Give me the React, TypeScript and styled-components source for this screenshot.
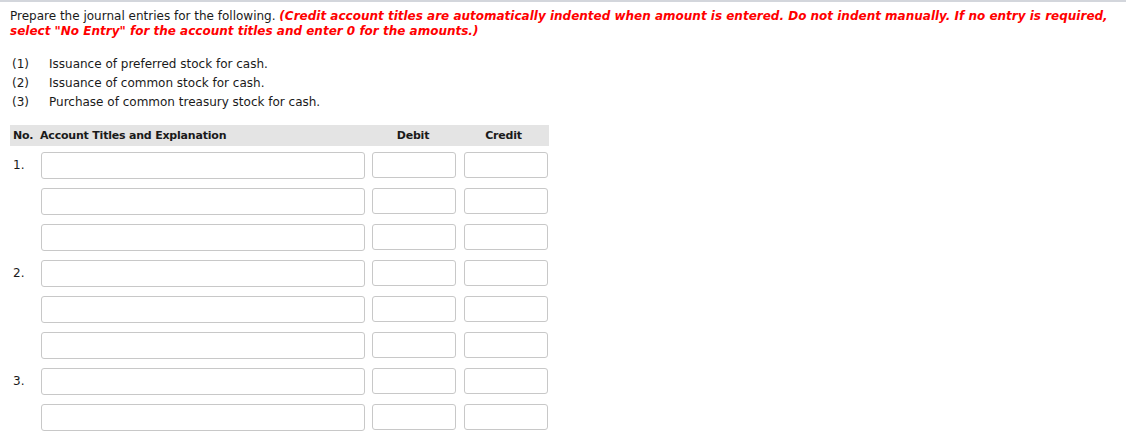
import styled, { createGlobalStyle } from 'styled-components';

const GlobalStyle = createGlobalStyle`
  html, body {
    margin: 0;
    padding: 0;
    background: #fff;
  }
  body {
    font-family: 'DejaVu Sans', Verdana, sans-serif;
    font-size: 12px;
    color: #1a1a1a;
  }
`;

const Page = styled.div`
  width: 1126px;
  height: 448px;
  box-sizing: border-box;
  border-top: 2px solid #d3d6dc;
  padding: 7px 10px 0 10px;
  overflow: hidden;
`;

const Instructions = styled.p`
  margin: 0;
  line-height: 15px;
`;

const Warning = styled.span`
  color: #ff0000;
  font-weight: bold;
  font-style: italic;
`;

const TaskList = styled.div`
  margin-top: 15px;
  display: flex;
  flex-direction: column;
`;

const Task = styled.div`
  display: flex;
  height: 19px;
  align-items: center;
`;

const TaskNo = styled.span`
  width: 39px;
  padding-left: 2px;
  box-sizing: border-box;
`;

const Table = styled.div`
  margin-top: 14px;
  width: 539px;
`;

const HeaderRow = styled.div`
  display: grid;
  grid-template-columns: 27px 331px 90px 91px;
  height: 21px;
  align-items: center;
  background: #e4e4e4;
  font-weight: bold;
  font-size: 11px;
  letter-spacing: -0.2px;
`;

const HeadCell = styled.div<{ $center?: boolean }>`
  padding-left: ${p => (p.$center ? '0' : '3px')};
  text-align: ${p => (p.$center ? 'center' : 'left')};
`;

const Body = styled.div`
  display: flex;
  flex-direction: column;
  gap: 10px;
  padding-top: 5px;
`;

const Row = styled.div`
  display: grid;
  grid-template-columns: 31px 324px 7px 84px 8px 84px;
  align-items: center;
  height: 26px;
`;

const RowNo = styled.div`
  padding-left: 3px;
`;

const Field = styled.input<{ $col: number }>`
  grid-column: ${p => p.$col};
  box-sizing: border-box;
  height: ${p => (p.$col === 2 ? '27px' : '26px')};
  margin-top: ${p => (p.$col === 2 ? '1px' : '-1px')};
  width: 100%;
  border: 1px solid #c8c8c8;
  border-radius: 3px;
  background: #fff;
  padding: 0 4px;
  font: inherit;
  outline: none;
`;

const rows = ['1.', '', '', '2.', '', '', '3.', ''];

export default function App() {
  return (
    <>
      <GlobalStyle />
      <Page>
        <Instructions>
          Prepare the journal entries for the following.{' '}
          <Warning>
            (Credit account titles are automatically indented when amount is entered. Do not indent manually. If no
            entry is required,
            <br />
            select "No Entry" for the account titles and enter 0 for the amounts.)
          </Warning>
        </Instructions>
        <TaskList>
          <Task>
            <TaskNo>(1)</TaskNo>Issuance of preferred stock for cash.
          </Task>
          <Task>
            <TaskNo>(2)</TaskNo>Issuance of common stock for cash.
          </Task>
          <Task>
            <TaskNo>(3)</TaskNo>Purchase of common treasury stock for cash.
          </Task>
        </TaskList>
        <Table>
          <HeaderRow>
            <HeadCell>No.</HeadCell>
            <HeadCell>Account Titles and Explanation</HeadCell>
            <HeadCell $center>Debit</HeadCell>
            <HeadCell $center>Credit</HeadCell>
          </HeaderRow>
          <Body>
            {rows.map((no, i) => (
              <Row key={i}>
                <RowNo>{no}</RowNo>
                <Field $col={2} />
                <Field $col={4} />
                <Field $col={6} />
              </Row>
            ))}
          </Body>
        </Table>
      </Page>
    </>
  );
}
